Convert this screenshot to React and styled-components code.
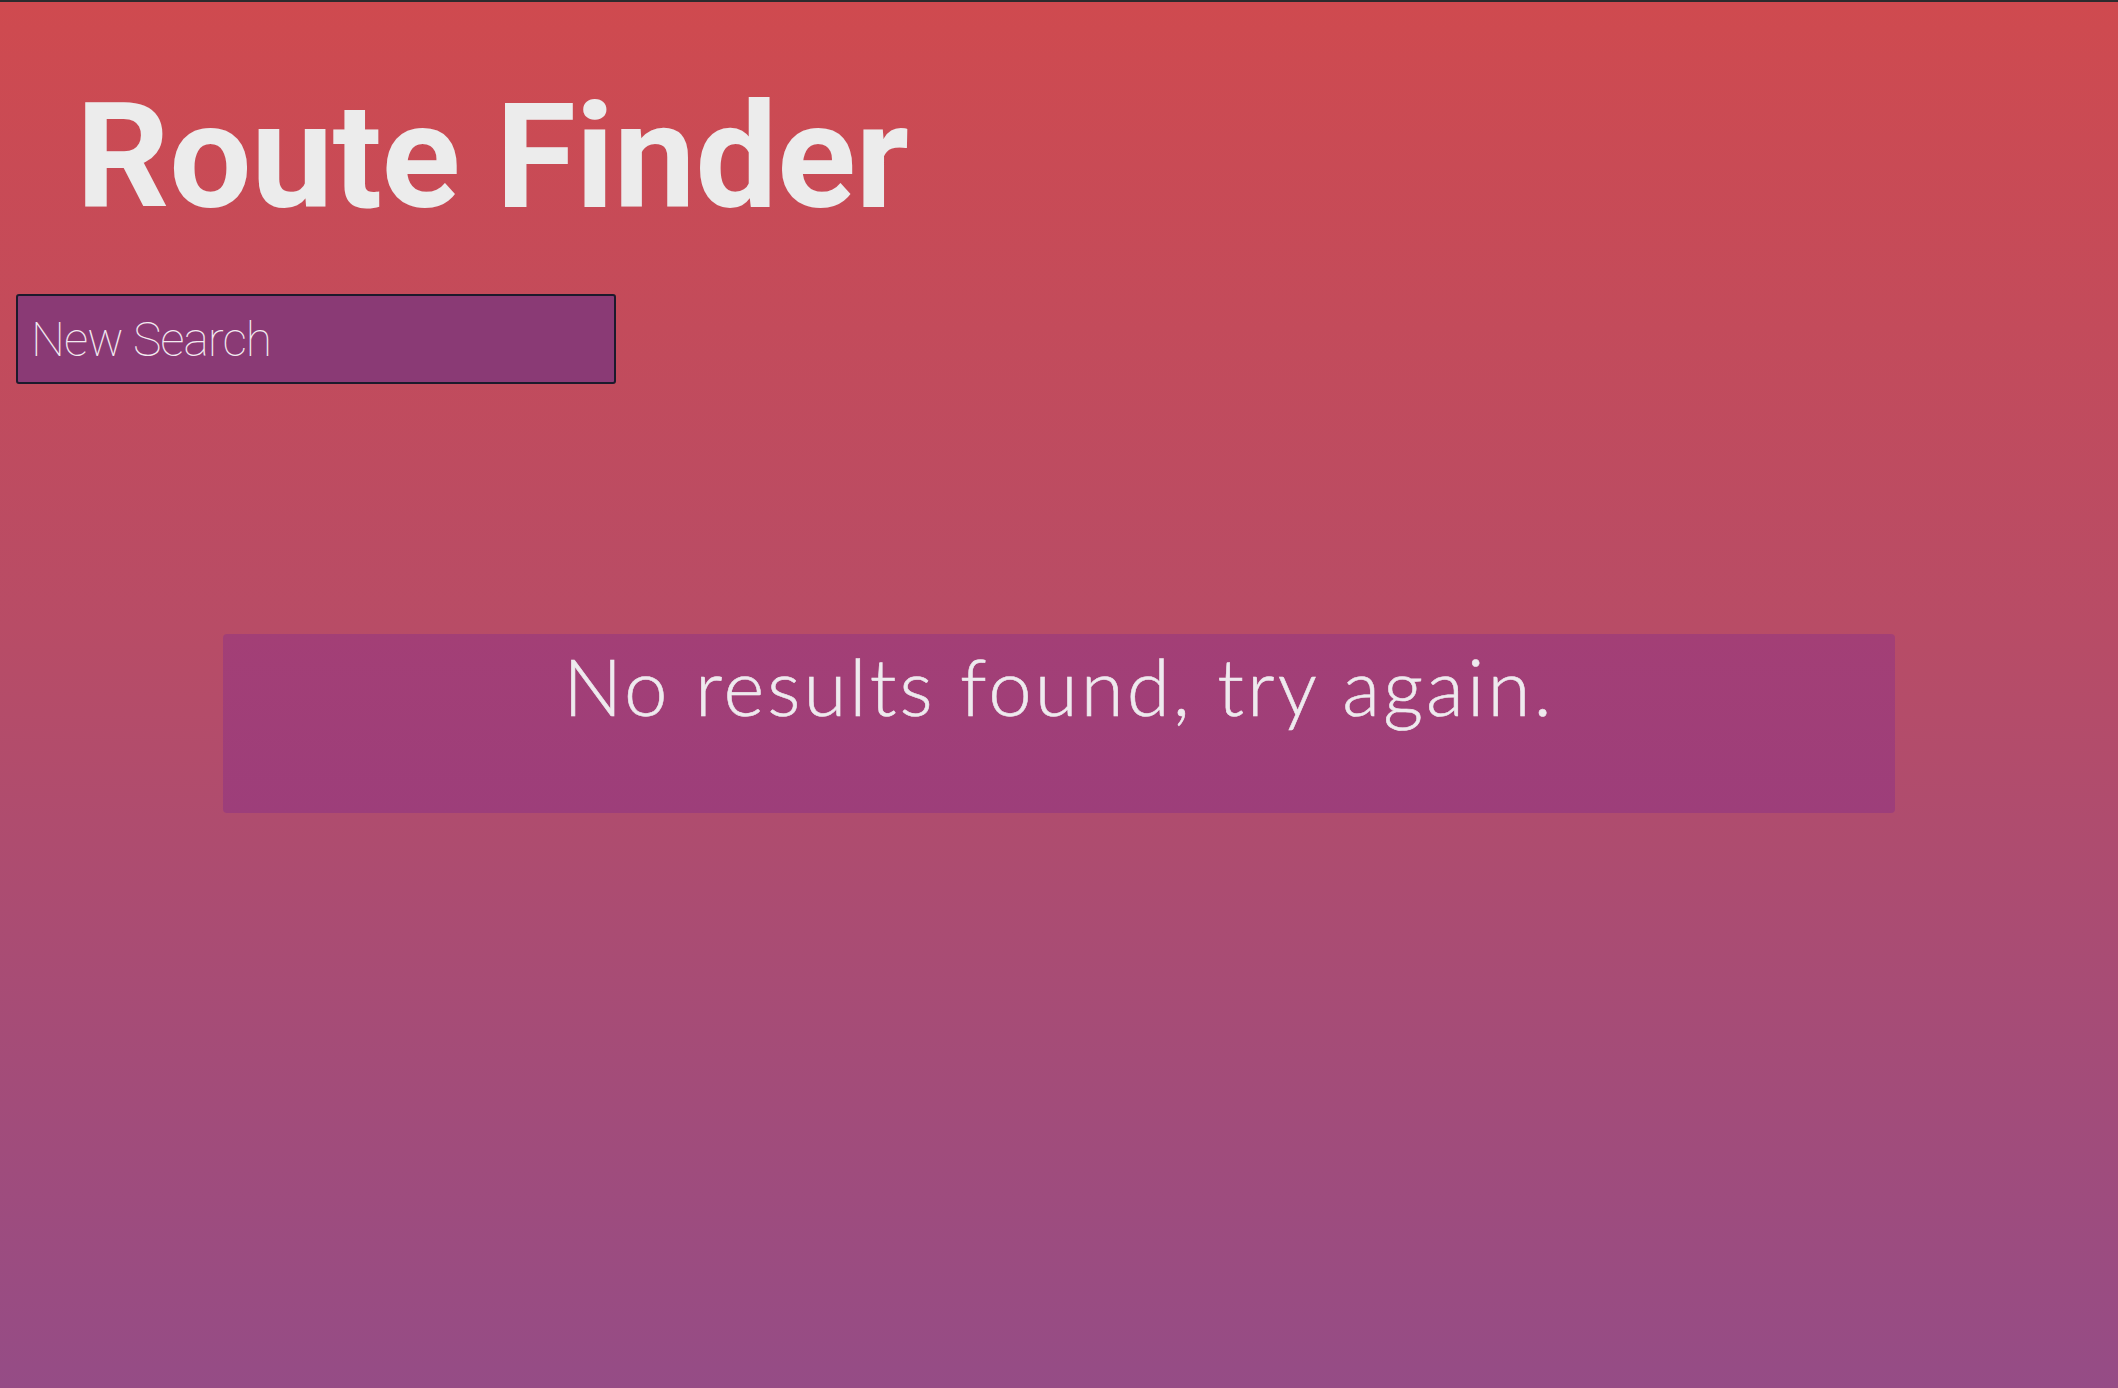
import React from 'react';
import styled, { createGlobalStyle } from 'styled-components';

const GlobalStyle = createGlobalStyle`
  html, body {
    margin: 0;
    padding: 0;
  }
  body {
    font-family: "Roboto", "Liberation Sans", sans-serif;
  }
`;

const Page = styled.div`
  min-height: 100vh;
  box-sizing: border-box;
  border-top: 2px solid #2b2b2d;
  background: linear-gradient(180deg, #cf4a4f 0%, #b84c66 45%, #954c86 100%);
  display: flex;
  flex-direction: column;
`;

const Header = styled.header`
  padding: 83px 0 0 76px;
`;

const Title = styled.h1`
  margin: 0;
  font-family: "Roboto", "Liberation Sans", sans-serif;
  font-weight: 700;
  font-size: 146px;
  line-height: 1;
  letter-spacing: -0.4px;
  color: #ececec;
`;

const Toolbar = styled.div`
  padding: 63px 0 0 16px;
`;

const SearchButton = styled.button`
  box-sizing: border-box;
  width: 600px;
  height: 90px;
  display: flex;
  align-items: center;
  padding: 0 0 0 13px;
  background: #8a3a75;
  border: 2px solid #1c1a2c;
  border-radius: 3px;
  color: #f2eaf0;
  font-family: "Roboto", "Inter", sans-serif;
  font-weight: 100;
  font-size: 48px;
  letter-spacing: -1px;
  cursor: pointer;
`;

const Results = styled.section`
  box-sizing: border-box;
  width: 1672px;
  height: 179px;
  margin: 250px auto 0;
  padding-top: 13px;
  border-radius: 4px;
  background: linear-gradient(180deg, #a33f76 0%, #9d3e7a 100%);
  text-align: center;
`;

const Message = styled.h2`
  margin: 0;
  font-family: "Lato", "Open Sans", sans-serif;
  font-weight: 300;
  font-size: 78px;
  line-height: 1;
  letter-spacing: 3.1px;
  color: #eeeaee;
  -webkit-text-stroke: 0.6px #eeeaee;
`;

export default function App() {
  return (
    <>
      <GlobalStyle />
      <Page>
        <Header>
          <Title>Route Finder</Title>
        </Header>
        <Toolbar>
          <SearchButton>New Search</SearchButton>
        </Toolbar>
        <Results>
          <Message>No results found, try again.</Message>
        </Results>
      </Page>
    </>
  );
}
